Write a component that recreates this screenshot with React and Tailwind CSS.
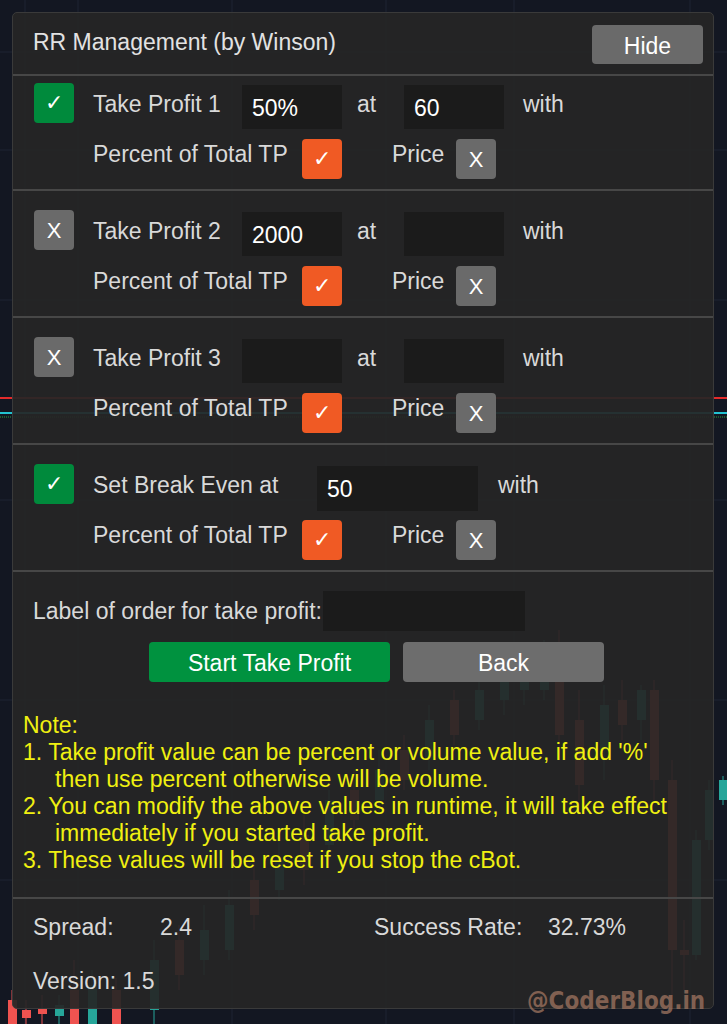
import React from 'react'

const candles = [
  // x, open, close, high, low (y coords), up?
  [8, 1000, 1024, 990, 1024, false],
  [22, 1010, 1018, 1000, 1024, false],
  [38, 1008, 1014, 995, 1024, false],
  [55, 1005, 1016, 995, 1024, true],
  [70, 990, 1024, 960, 1024, false],
  [88, 985, 1024, 970, 1024, true],
  [112, 990, 1024, 978, 1024, false],
  [150, 960, 1010, 940, 1024, true],
  [175, 940, 975, 925, 990, false],
  [200, 930, 960, 905, 975, true],
  [225, 905, 950, 890, 960, true],
  [250, 880, 915, 860, 930, false],
  [275, 860, 890, 840, 900, true],
  [300, 835, 870, 815, 885, false],
  [325, 800, 845, 790, 860, true],
  [350, 790, 820, 770, 830, false],
  [375, 770, 800, 750, 815, true],
  [400, 750, 780, 735, 790, false],
  [425, 720, 760, 705, 770, true],
  [450, 700, 735, 690, 745, false],
  [475, 690, 720, 675, 730, true],
  [500, 665, 700, 650, 715, true],
  [520, 680, 690, 660, 705, true],
  [540, 650, 690, 640, 700, true],
  [555, 680, 735, 630, 760, false],
  [575, 720, 785, 690, 800, false],
  [600, 705, 750, 685, 780, true],
  [618, 700, 725, 680, 740, false],
  [637, 690, 720, 685, 740, true],
  [650, 690, 780, 680, 800, false],
  [668, 780, 950, 760, 1000, false],
  [680, 950, 955, 920, 990, false],
  [692, 840, 955, 830, 960, true],
  [705, 790, 840, 780, 850, true],
  [719, 780, 800, 776, 805, true],
]

function Chart() {
  return (
    <svg className="absolute inset-0" width="727" height="1024" viewBox="0 0 727 1024">
      <rect width="727" height="1024" fill="#131722" />
      {[25, 78, 232, 386, 514, 690].map((x) => (
        <line key={'v' + x} x1={x} y1="0" x2={x} y2="1024" stroke="#1f2433" strokeWidth="1" />
      ))}
      {[52, 150, 300, 500, 700, 880].map((y) => (
        <line key={'h' + y} x1="0" y1={y} x2="727" y2={y} stroke="#1f2433" strokeWidth="1" />
      ))}
      <line x1="0" y1="398" x2="727" y2="398" stroke="#e32b2b" strokeWidth="2" />
      <line x1="0" y1="413" x2="727" y2="413" stroke="#22c3d1" strokeWidth="2" />
      <line x1="0" y1="417" x2="727" y2="417" stroke="#2f9e3a" strokeWidth="1" strokeDasharray="1 1" />
      {candles.map(([x, o, c, h, l, up], i) => {
        const col = up ? '#26a69a' : '#ef5350'
        const top = Math.min(o, c)
        const bh = Math.max(2, Math.abs(c - o))
        return (
          <g key={i}>
            <line x1={x + 4} y1={h} x2={x + 4} y2={l} stroke={col} strokeWidth="1" />
            <rect x={x} y={top} width="9" height={bh} fill={col} />
          </g>
        )
      })}
    </svg>
  )
}

function Box({ kind }) {
  const styles = {
    green: 'bg-[#008a3c]',
    orange: 'bg-[#f05a24]',
    grey: 'bg-[#6a6a6a]',
  }
  return (
    <div
      className={`w-[40px] h-[40px] shrink-0 rounded-[4px] flex items-center justify-center text-white text-[22px] leading-none ${styles[kind]}`}
    >
      {kind === 'grey' ? <span className="pt-[2px]">X</span> : '✓'}
    </div>
  )
}

function Input({ value, w = 'w-[100px]', h = 'h-[44px]' }) {
  return (
    <div className={`${w} ${h} shrink-0 bg-[#1b1b1b] flex items-center pl-[10px] pt-[2px] text-white text-[23px]`}>
      {value}
    </div>
  )
}

function SubRow() {
  return (
    <div className="flex items-start h-[40px] mt-[10px] pl-[80px]">
      <span className="w-[209px] mt-[3px] leading-[24px] text-[#d9d9d9]">Percent of Total TP</span>
      <Box kind="orange" />
      <span className="w-[64px] ml-[50px] mt-[3px] leading-[24px] text-[#d9d9d9]">Price</span>
      <Box kind="grey" />
    </div>
  )
}

function TPSection({ first, on, label, a, b }) {
  return (
    <div className={`border-t-2 border-[#474747] pb-[10px] ${first ? 'pt-[9px]' : 'pt-[21px]'}`}>
      <div className="flex items-start h-[44px] pl-[21px]">
        <div className="-mt-[2px]">
          <Box kind={on ? 'green' : 'grey'} />
        </div>
        <span className="w-[149px] ml-[19px] mt-[7px] leading-[24px] text-[#d9d9d9]">{label}</span>
        <Input value={a} />
        <span className="w-[47px] ml-[15px] mt-[7px] leading-[24px] text-[#d9d9d9]">at</span>
        <Input value={b} />
        <span className="ml-[19px] mt-[7px] leading-[24px] text-[#d9d9d9]">with</span>
      </div>
      <SubRow />
    </div>
  )
}

export default function App() {
  return (
    <div
      className="relative w-[727px] h-[1024px] overflow-hidden"
      style={{ fontFamily: "'Liberation Sans', Arial, sans-serif" }}
    >
      <Chart />

      <div className="relative ml-[12px] mt-[12px] w-[702px] h-[997px] bg-[#262626]/[0.93] border border-[#3a3a3a] rounded-[5px] text-[23px]">
        {/* header */}
        <div className="flex items-start justify-between h-[61px] pl-[20px] pr-[10px]">
          <span className="mt-[17px] leading-[24px] text-[#e2e2e2]">RR Management (by Winson)</span>
          <button className="mt-[12px] w-[111px] h-[39px] rounded-[4px] bg-[#6a6a6a] text-white text-[23px] pt-[3px]">
            Hide
          </button>
        </div>

        <TPSection first on label="Take Profit 1" a="50%" b="60" />
        <TPSection label="Take Profit 2" a="2000" b="" />
        <TPSection label="Take Profit 3" a="" b="" />

        {/* break even */}
        <div className="border-t-2 border-[#474747] pt-[21px] pb-[10px]">
          <div className="flex items-start h-[44px] pl-[21px]">
            <div className="-mt-[2px]">
              <Box kind="green" />
            </div>
            <span className="w-[224px] ml-[19px] mt-[7px] leading-[24px] text-[#d9d9d9]">Set Break Even at</span>
            <Input value="50" w="w-[161px]" h="h-[45px]" />
            <span className="ml-[20px] mt-[7px] leading-[24px] text-[#d9d9d9]">with</span>
          </div>
          <SubRow />
        </div>

        {/* label + buttons */}
        <div className="border-t-2 border-[#474747] pt-[19px]">
          <div className="flex items-center h-[40px] pl-[20px]">
            <span className="w-[290px] whitespace-nowrap leading-[24px] text-[#d9d9d9]">Label of order for take profit:</span>
            <div className="w-[202px] h-[40px] bg-[#1b1b1b]" />
          </div>
          <div className="flex gap-[13px] mt-[11px] pl-[136px]">
            <button className="w-[241px] h-[40px] rounded-[4px] bg-[#00923f] text-white text-[23px] pt-[2px]">
              Start Take Profit
            </button>
            <button className="w-[201px] h-[40px] rounded-[4px] bg-[#6d6d6d] text-white text-[23px] pt-[2px]">
              Back
            </button>
          </div>
        </div>

        {/* note */}
        <div className="mt-[30px] pl-[10px] pb-[23px] text-[#f0f011] leading-[27px]">
          <div>Note:</div>
          <div>1. Take profit value can be percent or volume value, if add '%'</div>
          <div className="pl-[32px]">then use percent otherwise will be volume.</div>
          <div>2. You can modify the above values in runtime, it will take effect</div>
          <div className="pl-[32px]">immediately if you started take profit.</div>
          <div>3. These values will be reset if you stop the cBot.</div>
        </div>

        {/* footer */}
        <div className="border-t-2 border-[#474747] pl-[20px] text-[#d9d9d9]">
          <div className="flex items-center h-[52px] mt-[2px]">
            <span className="w-[127px]">Spread:</span>
            <span className="w-[214px]">2.4</span>
            <span className="w-[174px]">Success Rate:</span>
            <span>32.73%</span>
          </div>
          <div className="flex items-center h-[56px]">
            <span>Version: 1.5</span>
          </div>
        </div>
      </div>

      <div
        className="absolute left-[527px] top-[986px] text-[24px] leading-[30px] font-bold text-[#a07560]/75"
        style={{ fontFamily: "'DejaVu Sans Condensed', 'DejaVu Sans', sans-serif" }}
      >
        @CoderBlog.in
      </div>
    </div>
  )
}
